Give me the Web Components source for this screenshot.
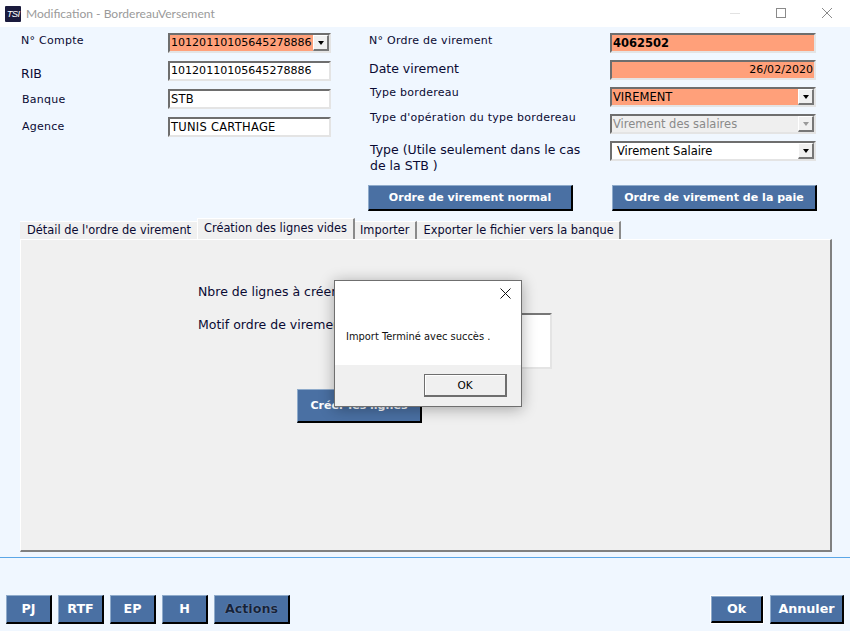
<!DOCTYPE html>
<html>
<head>
<meta charset="utf-8">
<title>Modification - BordereauVersement</title>
<style>
  html, body { margin: 0; padding: 0; }
  body { width: 850px; height: 631px; overflow: hidden; background: #f0f7ff; font-family: "DejaVu Sans", sans-serif; }
</style>
</head>
<body>
<app-window>
  <title-bar slot="title">Modification - BordereauVersement</title-bar>

  <form-grid slot="left" columns="147px 163px">
    <form-row h="28" pad="1"><span slot="label">N° Compte</span><combo-box hot digits>10120110105645278886</combo-box></form-row>
    <form-row h="28" pad="5" big><span slot="label">RIB</span><text-field digits>10120110105645278886</text-field></form-row>
    <form-row h="28" pad="4" nudge><span slot="label">Banque</span><text-field>STB</text-field></form-row>
    <form-row h="28" pad="3" nudge><span slot="label">Agence</span><text-field>TUNIS CARTHAGE</text-field></form-row>
  </form-grid>

  <form-grid slot="right" columns="241px 206px">
    <form-row h="27" pad="1"><span slot="label">N° Ordre de virement</span><text-field hot bold>4062502</text-field></form-row>
    <form-row h="27" pad="1" big><span slot="label">Date virement</span><text-field hot end digits>26/02/2020</text-field></form-row>
    <form-row h="27" pad="-1" nudge><span slot="label">Type bordereau</span><combo-box hot>VIREMENT</combo-box></form-row>
    <form-row h="27" pad="-3" nudge><span slot="label">Type d'opération du type bordereau</span><combo-box disabled>Virement des salaires</combo-box></form-row>
    <form-row h="44" pad="1" big nudge><span slot="label">Type (Utile seulement dans le cas de la STB )</span><combo-box indent>Virement Salaire</combo-box></form-row>
  </form-grid>

  <blue-button slot="act1" w="205" h="26">Ordre de virement normal</blue-button>
  <blue-button slot="act2" w="205" h="26">Ordre de virement de la paie</blue-button>

  <tab-panel slot="tabs">
    <create-lines></create-lines>
  </tab-panel>

  <blue-button slot="foot-left" w="46" h="29" large>PJ</blue-button>
  <blue-button slot="foot-left" w="46" h="29" large>RTF</blue-button>
  <blue-button slot="foot-left" w="46" h="29" large>EP</blue-button>
  <blue-button slot="foot-left" w="46" h="29" large>H</blue-button>
  <blue-button slot="foot-left" w="76" h="29" large dim>Actions</blue-button>
  <blue-button slot="foot-right" w="52" h="27" large focus>Ok</blue-button>
  <blue-button slot="foot-right" w="74" h="29" large>Annuler</blue-button>

  <message-box slot="overlay">Import Terminé avec succès .</message-box>
</app-window>

<script>
const FIELD_CSS = `
  :host {
    display: block;
    box-sizing: border-box;
    height: 20px;
    border: 2px solid;
    border-color: #6e6e6e #e4e4e4 #e4e4e4 #6e6e6e;
    background: #fff;
    color: #000;
    font: 11.5px/16px "DejaVu Sans", sans-serif;
    letter-spacing: 0;
    white-space: nowrap;
    overflow: hidden;
  }
  :host([hot]) { background: #ffa07a; }
  :host([digits]) { font-size: 11.05px; }
`;

class AppWindow extends HTMLElement {
  constructor() {
    super();
    this.attachShadow({mode: "open"});
    this.shadowRoot.innerHTML = `
      <style>
        :host { display: flex; flex-direction: column; position: relative; width: 850px; height: 631px; }
        #top { display: flex; padding: 6px 0 0 21px; height: 158px; box-sizing: border-box; }
        #top-left { width: 348px; }
        #acts { display: flex; gap: 39px; padding-left: 368px; height: 33px; }
        #tabs { padding: 0 18px 0 20px; height: 334px; }
        #line { height: 1px; background: #5ba6e6; margin-top: 5px; }
        #foot { display: flex; justify-content: space-between; padding: 37px 6px 0 6px; }
        #foot-left, #foot-right { display: flex; gap: 6px; }
        #foot-right { align-items: center; gap: 7px; }
      </style>
      <slot name="title"></slot>
      <div id="top">
        <div id="top-left"><slot name="left"></slot></div>
        <div id="top-right"><slot name="right"></slot></div>
      </div>
      <div id="acts"><slot name="act1"></slot><slot name="act2"></slot></div>
      <div id="tabs"><slot name="tabs"></slot></div>
      <div id="line"></div>
      <div id="foot">
        <div id="foot-left"><slot name="foot-left"></slot></div>
        <div id="foot-right"><slot name="foot-right"></slot></div>
      </div>
      <slot name="overlay"></slot>
    `;
  }
}

class TitleBar extends HTMLElement {
  constructor() {
    super();
    this.attachShadow({mode: "open"});
    this.shadowRoot.innerHTML = `
      <style>
        :host { display: flex; align-items: center; height: 27px; background: #fff; padding-left: 5px; }
        #logo { width: 16px; height: 16px; background: #1b1b3d; color: #fff; border-radius: 1px; overflow: hidden;
                font: italic 9.5px/16px "Liberation Sans", sans-serif; text-align: center; letter-spacing: -0.7px; }
        #text { margin-left: 5px; color: #9a9a9a; font: 12.05px "Lato", sans-serif; flex: 1; }
        #btns { display: flex; }
        svg { display: block; width: 46px; height: 27px; }
      </style>
      <div id="logo">TSI</div>
      <div id="text"><slot></slot></div>
      <div id="btns">
        <svg viewBox="0 0 46 27"><path d="M18 13.5h10" stroke="#e2e2e2" fill="none"/></svg>
        <svg viewBox="0 0 46 27"><rect x="18.5" y="8.5" width="9" height="9" stroke="#8a8a8a" fill="none"/></svg>
        <svg viewBox="0 0 46 27"><path d="M18 8l10 10M28 8L18 18" stroke="#8a8a8a" fill="none"/></svg>
      </div>
    `;
  }
}

class FormGrid extends HTMLElement {
  constructor() {
    super();
    this.attachShadow({mode: "open"});
    this.shadowRoot.innerHTML = `
      <style>:host { display: block; }</style>
      <slot></slot>
    `;
  }
  connectedCallback() {
    this.style.setProperty("--cols", this.getAttribute("columns"));
  }
}

class FormRow extends HTMLElement {
  constructor() {
    super();
    this.attachShadow({mode: "open"});
    this.shadowRoot.innerHTML = `
      <style>
        :host { display: grid; grid-template-columns: var(--cols); color: #0a0a33; font: 11px/13px "DejaVu Sans", sans-serif; letter-spacing: .26px; }
        :host([big]) { font-size: 12.5px; line-height: 15.5px; letter-spacing: 0; }
        #label { padding-right: 28px; }
        :host([nudge]) #label { padding-left: 1px; }
      </style>
      <div id="label"><slot name="label"></slot></div>
      <slot></slot>
    `;
  }
  connectedCallback() {
    this.style.height = this.getAttribute("h") + "px";
    this.shadowRoot.getElementById("label").style.marginTop = this.getAttribute("pad") + "px";
  }
}

class TextField extends HTMLElement {
  constructor() {
    super();
    this.attachShadow({mode: "open"});
    this.shadowRoot.innerHTML = `
      <style>
        ${FIELD_CSS}
        :host { padding: 0 1px; letter-spacing: .26px; }
        :host([digits]), :host([bold]) { letter-spacing: 0; }
        :host([bold]) { font-weight: bold; }
        :host([end]) { text-align: right; }
      </style>
      <slot></slot>
    `;
  }
}

class ComboBox extends HTMLElement {
  constructor() {
    super();
    this.attachShadow({mode: "open"});
    this.shadowRoot.innerHTML = `
      <style>
        ${FIELD_CSS}
        :host { display: flex; border-right-color: #e4e4e4; }
        #val { flex: 1; padding-left: 1px; overflow: hidden; }
        :host([indent]) #val { padding-left: 5px; }
        :host([disabled]) { background: #efefef; color: #8a8a8a; }
        #arrow { width: 16px; height: 16px; box-sizing: border-box; background: #f0f0f0;
                 border: 2px solid; border-width: 1px 2px 2px 1px; border-color: #fff #777 #777 #fff; display: flex; align-items: center; justify-content: center; }
        #arrow i { width: 0; height: 0; border: 3.5px solid transparent; border-top: 4px solid #000; border-bottom: 0; }
        :host([disabled]) #arrow i { border-top-color: #999; }
      </style>
      <div id="val"><slot></slot></div>
      <div id="arrow"><i></i></div>
    `;
  }
}

class BlueButton extends HTMLElement {
  constructor() {
    super();
    this.attachShadow({mode: "open"});
    this.shadowRoot.innerHTML = `
      <style>
        :host { display: flex; align-items: center; justify-content: center; box-sizing: border-box;
                background: #4a70a3; color: #fff; border: 1px solid; border-width: 1px 2px 2px 1px;
                border-color: #8fabcb #000 #000 #8fabcb; font: bold 11.05px "DejaVu Sans", sans-serif; white-space: nowrap; }
        :host([large]) { font-size: 12.7px; padding-bottom: 2px; }
        :host([dim]) { color: #14233b; text-shadow: 0 0 1px #9db2cd; }
        :host([focus]) { box-shadow: 0 0 0 1px #fff; }
      </style>
      <slot></slot>
    `;
  }
  connectedCallback() {
    this.style.width = this.getAttribute("w") + "px";
    this.style.height = this.getAttribute("h") + "px";
  }
}

class TabPanel extends HTMLElement {
  constructor() {
    super();
    this.attachShadow({mode: "open"});
    this.shadowRoot.innerHTML = `
      <style>
        :host { display: flex; flex-direction: column; height: 334px; font: 11.4px "DejaVu Sans", sans-serif; color: #0a0a33; }
        #strip { display: flex; align-items: flex-end; height: 21px; }
        .tab { display: flex; align-items: center; height: 18px; padding: 0 5px 2px 5px; background: #f0f0f0;
               border-top: 1px solid #fff; border-right: 2px solid #8a8a8a; box-sizing: border-box; }
        .tab.first { border-right: 0; width: 177px; padding-left: 7px; }
        .tab.on { height: 21px; width: 158px; padding: 0 0 3px 6px; border-left: 1px solid #fff; }
        .tab.last { padding-left: 7px; }
        #body { flex: 1; background: #f0f0f0; border: 1px solid; border-width: 1px 2px 2px 1px; border-color: #fff #808080 #808080 #fff; position: relative; }
      </style>
      <div id="strip">
        <div class="tab first">Détail de l'ordre de virement</div>
        <div class="tab on">Création des lignes vides</div>
        <div class="tab">Importer</div>
        <div class="tab last">Exporter le fichier vers la banque</div>
      </div>
      <div id="body"><slot></slot></div>
    `;
  }
}

class CreateLines extends HTMLElement {
  constructor() {
    super();
    this.attachShadow({mode: "open"});
    this.shadowRoot.innerHTML = `
      <style>
        :host { display: grid; grid-template-columns: 178px 176px 1fr; padding: 45px 0 0 177px; font: 12.5px/14px "DejaVu Sans", sans-serif; color: #0a0a33; }
        .l1 { grid-column: 1 / -1; height: 33px; }
        .l2 { grid-column: 1; white-space: nowrap; }
        #area { grid-column: 2; box-sizing: border-box; height: 56px; margin-top: -5px; background: #fff; border: 2px solid; border-color: #777 #e4e4e4 #e4e4e4 #777; }
        #go { grid-column: 1 / -1; padding: 20px 0 0 99px; }
      </style>
      <div class="l1">Nbre de lignes à créer</div>
      <div class="l2">Motif ordre de virement</div>
      <div id="area"></div>
      <div id="go"><blue-button w="125" h="34">Créer les lignes</blue-button></div>
    `;
  }
}

class MessageBox extends HTMLElement {
  constructor() {
    super();
    this.attachShadow({mode: "open"});
    this.shadowRoot.innerHTML = `
      <style>
        :host { position: absolute; left: 334px; top: 280px; width: 188px; height: 127px; box-sizing: border-box;
                display: flex; flex-direction: column; background: #fff; border: 1px solid #6f6f6f;
                box-shadow: 0 2px 14px rgba(0,0,0,.32); font: 9.9px "DejaVu Sans", sans-serif; color: #111; }
        #head { height: 27px; display: flex; justify-content: flex-end; }
        #head svg { display: block; width: 32px; height: 27px; }
        #msg { flex: 1; padding: 23px 0 0 11px; }
        #foot { height: 41px; background: #f0f0f0; display: flex; justify-content: flex-end; padding: 9px 14px 0 0; box-sizing: border-box; }
        #ok { width: 83px; height: 23px; box-sizing: border-box; display: flex; align-items: center; justify-content: center;
              border: 2px solid #6e6e6e; border-top-width: 1px; border-left-width: 1px; background: #f0f0f0; color: #000; box-shadow: inset 1px 1px 0 #fff; font-size: 10.5px; }
      </style>
      <div id="head"><svg viewBox="0 0 32 27"><path d="M11.5 7.5l10 10M21.5 7.5l-10 10" stroke="#111" fill="none"/></svg></div>
      <div id="msg"><slot></slot></div>
      <div id="foot"><div id="ok">OK</div></div>
    `;
  }
}

customElements.define("app-window", AppWindow);
customElements.define("title-bar", TitleBar);
customElements.define("form-grid", FormGrid);
customElements.define("form-row", FormRow);
customElements.define("text-field", TextField);
customElements.define("combo-box", ComboBox);
customElements.define("blue-button", BlueButton);
customElements.define("tab-panel", TabPanel);
customElements.define("create-lines", CreateLines);
customElements.define("message-box", MessageBox);
</script>
</body>
</html>
